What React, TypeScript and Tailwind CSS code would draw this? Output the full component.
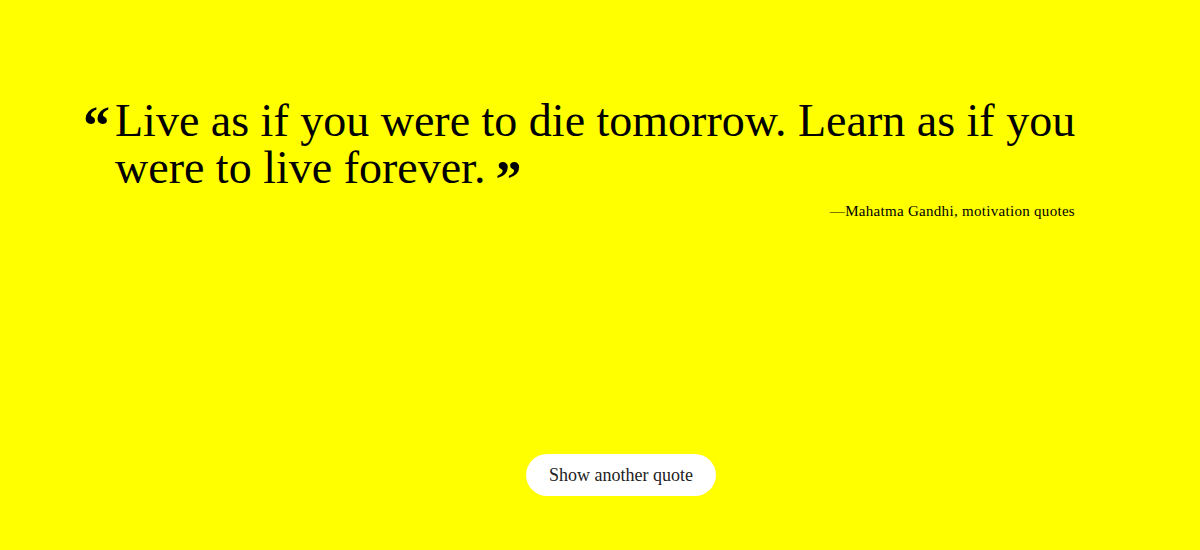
export default function App() {
  return (
    <div
      className="w-[1200px] h-[550px] bg-[#ffff00] text-black flex flex-col"
      style={{ fontFamily: '"Liberation Serif", "DejaVu Serif", serif' }}
    >
      <div className="pt-[97px] pl-[85px] w-[1100px]">
        <div className="flex items-start">
          <span className="text-[54px] leading-[54px] font-bold w-[32px] shrink-0 mt-[2px] -ml-[2px]">“</span>
          <p className="text-[46px] leading-[47px]">
            Live as if you were to die tomorrow. Learn as if you were to live forever.
            <span className="inline-block text-[52px] font-bold leading-[30px] align-[-14px] ml-[10px]">”</span>
          </p>
        </div>
        <p className="text-right text-[15px] mt-[5px] pr-[25px] tracking-[0.3px]">
          —Mahatma Gandhi, motivation quotes
        </p>
      </div>
      <div className="flex-1" />
      <div className="flex justify-center pl-[42px] pb-[54px]">
        <button className="w-[190px] h-[42px] rounded-full bg-white text-[#222] text-[18px]">
          Show another quote
        </button>
      </div>
    </div>
  );
}
